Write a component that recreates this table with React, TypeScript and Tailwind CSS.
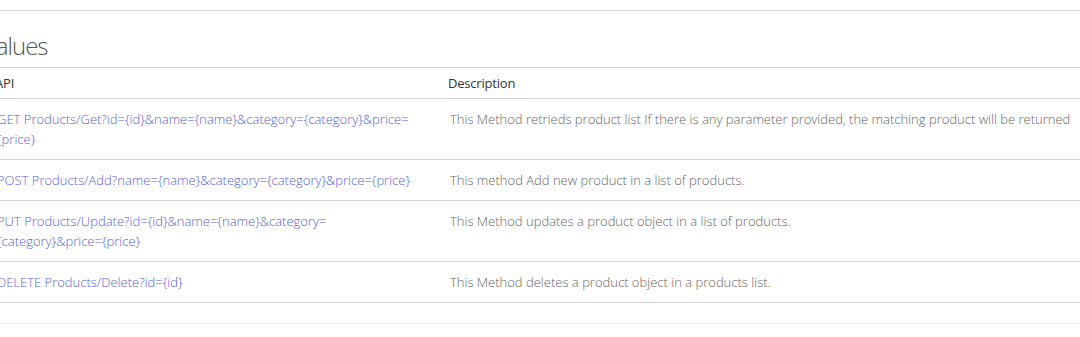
const rows: { api: string[]; desc: string }[] = [
  {
    api: ["GET Products/Get?id={id}&name={name}&category={category}&price=", "{price}"],
    desc: "This Method retrieds product list If there is any parameter provided, the matching product will be returned",
  },
  {
    api: ["POST Products/Add?name={name}&category={category}&price={price}"],
    desc: "This method Add new product in a list of products.",
  },
  {
    api: ["PUT Products/Update?id={id}&name={name}&category=", "{category}&price={price}"],
    desc: "This Method updates a product object in a list of products.",
  },
  {
    api: ["DELETE Products/Delete?id={id}"],
    desc: "This Method deletes a product object in a products list.",
  },
];

export default function App() {
  return (
    <div
      className="w-[1080px] h-[337px] overflow-hidden bg-white"
      style={{ fontFamily: '"Segoe UI", "Open Sans", "Noto Sans", sans-serif' }}
    >
      <div className="h-[11px] border-b border-[#d4d4d4]" />
      <div className="-ml-[11px] w-[1132px]">
        <h2 className="-ml-[6px] pt-[22px] pb-[8px] text-[24px] leading-[26px] tracking-[-1px] font-light text-[#555]">Values</h2>
        <div className="border-t border-[#d4d4d4] text-[13px] leading-[20px]">
          <div className="grid grid-cols-[453px_1fr] border-b border-[#d4d4d4] text-[#333] tracking-[-0.2px]">
            <div className="px-[6px] py-[5px]">API</div>
            <div className="px-[6px] py-[5px]">Description</div>
          </div>
          {rows.map((r, i) => (
            <div key={i} className="grid grid-cols-[453px_1fr] border-b border-[#d4d4d4] font-light">
              <div className="px-[8px] py-[10px] text-[#5a5fd8]">
                {r.api.map((l, j) => (
                  <div key={j}>{l}</div>
                ))}
              </div>
              <div className="px-[8px] py-[10px] text-[#666]">{r.desc}</div>
            </div>
          ))}
        </div>
      </div>
      <div className="mt-[20px] border-t border-[#eeeeee]" />
    </div>
  );
}
